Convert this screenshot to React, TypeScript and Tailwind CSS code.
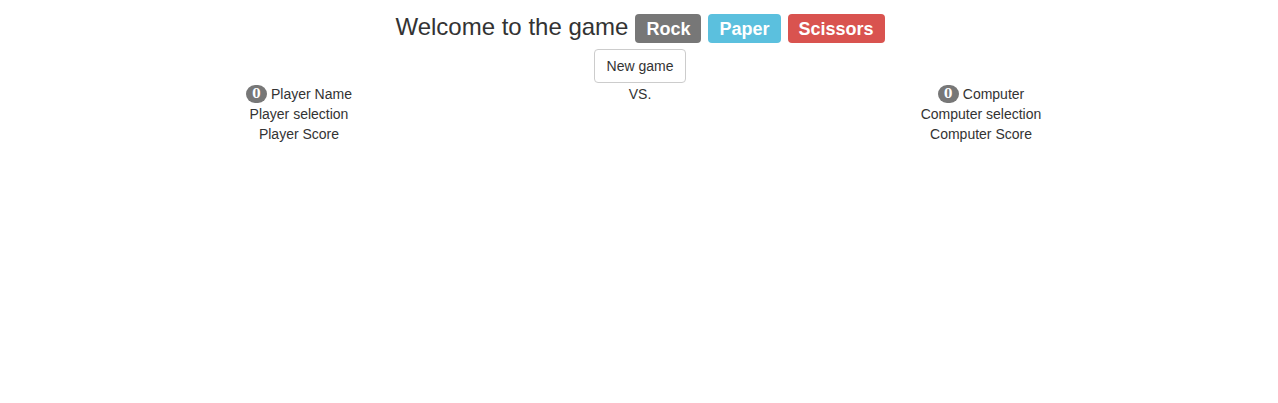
import React from 'react';

const choices = [
  { name: 'Rock', bg: 'bg-[#777777]' },
  { name: 'Paper', bg: 'bg-[#5bc0de]' },
  { name: 'Scissors', bg: 'bg-[#d9534f]' },
];

const Badge: React.FC<{ value: number }> = ({ value }) => (
  <span className="inline-flex h-[18px] w-[21px] items-center justify-center rounded-[10px] bg-[#777777] font-['DejaVu_Serif',serif] text-[12px] font-bold leading-none text-white">
    {value}
  </span>
);

export default function App() {
  return (
    <div className="min-h-[403px] bg-white pl-[2px] font-['Liberation_Sans',Arial,sans-serif] text-[14px] leading-[20px] text-[#333333]">
      <div className="flex items-center justify-center gap-[7px] pt-[14px]">
        <h3 className="mb-[4px] text-[24px] leading-[25px]">Welcome to the game</h3>
        {choices.map((c) => (
          <button
            key={c.name}
            className={`${c.bg} flex h-[29px] items-center rounded-[4px] px-[11px] text-[18px] font-bold leading-none text-white`}
          >
            {c.name}
          </button>
        ))}
      </div>

      <div className="mt-[6px] flex justify-center">
        <button className="h-[34px] rounded-[4px] border border-[#cccccc] bg-white px-[12px] text-[14px] text-[#333333]">
          New game
        </button>
      </div>

      <div className="mx-auto mt-[1px] grid w-[1023px] grid-cols-3 text-center">
        <div>
          <div className="flex items-center justify-center gap-[4px]">
            <Badge value={0} />
            <span>Player Name</span>
          </div>
          <div>Player selection</div>
          <div>Player Score</div>
        </div>
        <div>VS.</div>
        <div>
          <div className="flex items-center justify-center gap-[4px]">
            <Badge value={0} />
            <span>Computer</span>
          </div>
          <div>Computer selection</div>
          <div>Computer Score</div>
        </div>
      </div>
    </div>
  );
}
